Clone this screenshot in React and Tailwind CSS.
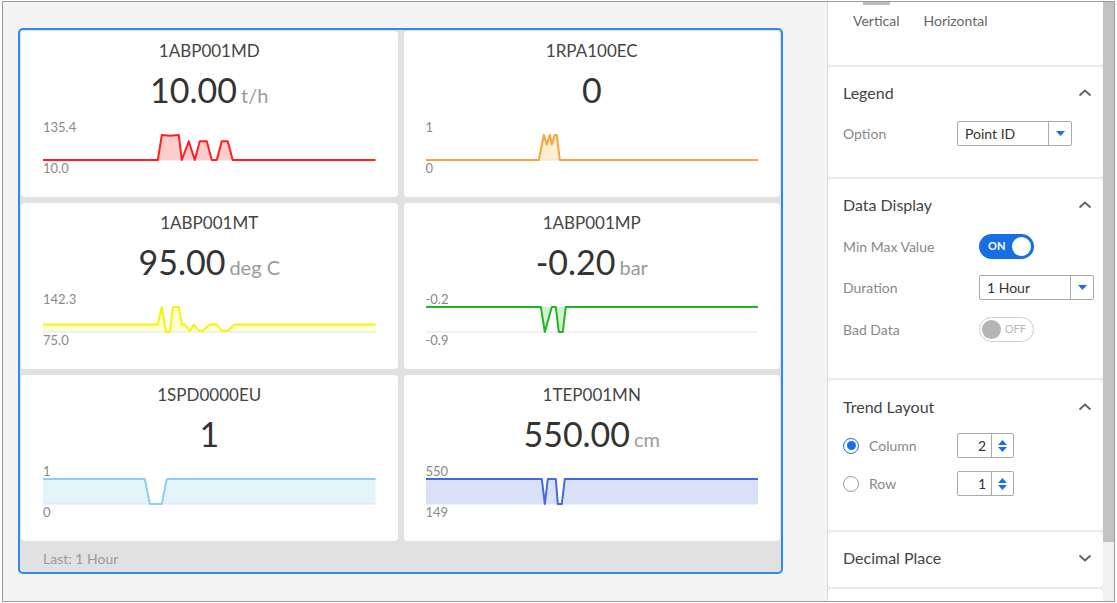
import React from "react";

// trend cards: x offsets in px along the chart, f = 0 (min) .. 1 (max)
const trends = [
  {
    id: "1ABP001MD", value: "10.00", unit: "t/h", max: "135.4", min: "10.0",
    color: "#ff1f1f", fill: "rgba(255,0,0,0.2)", origin: "bottom",
    pts: [[0, 0], [115, 0], [119, 1], [127, 0.97], [136, 1], [139, 0], [146, 0.75], [152, 0], [157, 0.75], [164, 0.75], [169, 0], [174, 0], [179, 0.75], [185, 0.75], [190, 0], [333, 0]],
  },
  {
    id: "1RPA100EC", value: "0", unit: "", max: "1", min: "0",
    color: "#f7a53c", fill: "rgba(255,165,0,0.18)", origin: "bottom",
    pts: [[0, 0], [113, 0], [118, 1], [121, 0.62], [124, 1], [126, 0.62], [129, 1], [131, 1], [134, 0], [333, 0]],
  },
  {
    id: "1ABP001MT", value: "95.00", unit: "deg C", max: "142.3", min: "75.0",
    color: "#f5f500", fill: "rgba(255,255,0,0.18)", origin: "bottom",
    pts: [[0, 0.3], [115, 0.3], [119, 1], [123, 0], [127, 0], [130, 1], [136, 1], [139, 0.3], [142, 0.3], [147, 0.05], [151, 0.3], [156, 0.05], [160, 0.05], [167, 0.3], [174, 0.3], [179, 0.05], [185, 0.05], [192, 0.3], [333, 0.3]],
  },
  {
    id: "1ABP001MP", value: "-0.20", unit: "bar", max: "-0.2", min: "-0.9",
    color: "#22b522", fill: "rgba(0,180,0,0.18)", origin: "top",
    pts: [[0, 1], [115, 1], [119, 0], [126, 1], [130, 1], [133, 0], [137, 0], [140, 1], [333, 1]],
  },
  {
    id: "1SPD0000EU", value: "1", unit: "", max: "1", min: "0",
    color: "#8ccfee", fill: "rgba(135,206,235,0.22)", origin: "bottom",
    pts: [[0, 1], [102, 1], [107, 0], [119, 0], [124, 1], [333, 1]],
  },
  {
    id: "1TEP001MN", value: "550.00", unit: "cm", max: "550", min: "149",
    color: "#4468de", fill: "rgba(65,105,225,0.2)", origin: "bottom",
    pts: [[0, 1], [116, 1], [119, 0], [122, 1], [130, 1], [132, 0], [136, 0], [139, 1], [333, 1]],
  },
];

const toY = (f) => 1 + (1 - f) * 25;

function Sparkline({ t }) {
  const line = t.pts.map(([x, f], i) => `${i ? "L" : "M"}${x} ${toY(f)}`).join(" ");
  const base = t.origin === "top" ? 1 : 26;
  const area = `${line} L333 ${base} L0 ${base} Z`;
  return (
    <svg viewBox="0 0 333 27" preserveAspectRatio="none" className="block w-full h-[27px]">
      <path d={area} fill={t.fill} stroke="none" />
      <line x1="0" y1="26" x2="333" y2="26" stroke="#dbe3f3" strokeWidth="1" />
      <path d={line} fill="none" stroke={t.color} strokeWidth="2" strokeLinejoin="round" />
    </svg>
  );
}

function TrendCard({ t }) {
  return (
    <div className="bg-white rounded-[4px] h-[166px] flex flex-col pt-[8px] px-[22px]">
      <div className="text-center text-[17px] leading-[24px] text-[#454545]">{t.id}</div>
      <div className="mt-[7px] h-[40px] flex items-baseline justify-center">
        <span className="text-[34px] leading-[40px] text-[#333]">{t.value}</span>
        {t.unit && <span className="ml-[4px] text-[20px] text-[#9a9a9a]">{t.unit}</span>}
      </div>
      <div className="mt-[10px] text-[13px] leading-[14px] text-[#8a8a8a]">{t.max}</div>
      <Sparkline t={t} />
      <div className="text-[13px] leading-[14px] text-[#8a8a8a]">{t.min}</div>
    </div>
  );
}

function Chevron({ down }) {
  return (
    <svg width="14" height="8" viewBox="0 0 14 8" className="mr-[11px]">
      <polyline points={down ? "1.5,1.5 7,6.5 12.5,1.5" : "1.5,6.5 7,1.5 12.5,6.5"} fill="none" stroke="#606060" strokeWidth="1.8" />
    </svg>
  );
}

function SectionHead({ title, down }) {
  return (
    <div className="h-[24px] flex items-center justify-between">
      <span className="text-[16px] text-[#444]">{title}</span>
      <Chevron down={down} />
    </div>
  );
}

function Select({ value, width }) {
  return (
    <div className={`h-[25px] ${width} flex border border-[#aaa] rounded-[2px] bg-white`}>
      <span className="flex-1 pl-[7px] text-[14px] leading-[23px] text-[#333]">{value}</span>
      <span className="w-[23px] border-l border-[#aaa] flex items-center justify-center">
        <svg width="9" height="5" viewBox="0 0 9 5"><polygon points="0,0 9,0 4.5,5" fill="#1d6fe6" /></svg>
      </span>
    </div>
  );
}

function Spinner({ value }) {
  return (
    <div className="h-[25px] w-[57px] flex border border-[#aaa] rounded-[2px] bg-white">
      <span className="w-[33px] pr-[5px] text-right text-[14px] leading-[23px] text-[#333]">{value}</span>
      <span className="flex-1 border-l border-[#aaa] flex flex-col items-center justify-center gap-[2px]">
        <svg width="9" height="5" viewBox="0 0 9 5"><polygon points="0,5 9,5 4.5,0" fill="#1d6fe6" /></svg>
        <svg width="9" height="5" viewBox="0 0 9 5"><polygon points="0,0 9,0 4.5,5" fill="#1d6fe6" /></svg>
      </span>
    </div>
  );
}

function Radio({ checked, label }) {
  return (
    <div className="w-[114px] flex items-center">
      <span className={`w-[16px] h-[16px] rounded-full border flex items-center justify-center ${checked ? "border-[#1d6fe6]" : "border-[#9a9a9a]"}`}>
        {checked && <span className="w-[9px] h-[9px] rounded-full bg-[#1d6fe6]" />}
      </span>
      <span className="ml-[10px] text-[14px] text-[#888]">{label}</span>
    </div>
  );
}

function Row({ label, labelW, children, className }) {
  return (
    <div className={`h-[25px] flex items-center ${className}`}>
      <span className={`${labelW} text-[14px] text-[#888]`}>{label}</span>
      {children}
    </div>
  );
}

export default function App() {
  return (
    <div className="w-[1117px] h-[603px] bg-white pt-[1px] pl-[2px] font-['Lato','Liberation_Sans',sans-serif]">
      <div className="w-[1113px] h-[601px] border border-[#9c9c9c] flex overflow-hidden">
        {/* trend area */}
        <div className="w-[824px] bg-[#f4f4f4] pl-[15px] pt-[26px]">
          <div className="w-[765px] h-[546px] border-2 border-[#2f8bf0] rounded-[5px] bg-[#e1e1e1] flex flex-col">
            <div className="grid grid-cols-2 gap-[6px] p-[1px]">
              {trends.map((t) => (
                <TrendCard key={t.id} t={t} />
              ))}
            </div>
            <div className="flex-1 flex items-center pl-[23px] pt-[3px] text-[14px] text-[#9a9a9a]">Last: 1 Hour</div>
          </div>
        </div>

        {/* settings panel */}
        <div className="w-[276px] bg-[#ececec] border-l border-[#dcdcdc] flex flex-col gap-[2px]">
          <div className="h-[63px] bg-white rounded-b-[4px]">
            <div className="ml-[35px] w-[27px] h-[3px] bg-[#bdbdbd]" />
            <div className="mt-[6px] pl-[25px] flex gap-[24px] text-[14px] leading-[20px] text-[#666]">
              <span>Vertical</span>
              <span>Horizontal</span>
            </div>
          </div>

          <div className="h-[110px] bg-white rounded-[4px] pt-[14px] pl-[15px]">
            <SectionHead title="Legend" />
            <Row label="Option" labelW="w-[114px]" className="mt-[16px]">
              <Select value="Point ID" width="w-[115px]" />
            </Row>
          </div>

          <div className="h-[199px] bg-white rounded-[4px] pt-[14px] pl-[15px]">
            <SectionHead title="Data Display" />
            <Row label="Min Max Value" labelW="w-[136px]" className="mt-[17px]">
              <div className="w-[55px] h-[25px] rounded-full bg-[#1a6ee3] flex items-center pl-[9px] pr-[3px]">
                <span className="flex-1 text-[11px] font-bold text-white">ON</span>
                <span className="w-[19px] h-[19px] rounded-full bg-white" />
              </div>
            </Row>
            <Row label="Duration" labelW="w-[136px]" className="mt-[16px]">
              <Select value="1 Hour" width="w-[115px]" />
            </Row>
            <Row label="Bad Data" labelW="w-[136px]" className="mt-[17px]">
              <div className="w-[55px] h-[25px] rounded-full border border-[#cfcfcf] bg-white flex items-center pl-[2px] pr-[7px]">
                <span className="w-[19px] h-[19px] rounded-full bg-[#b5b5b5]" />
                <span className="flex-1 text-right text-[11px] text-[#b8b8b8]">OFF</span>
              </div>
            </Row>
          </div>

          <div className="h-[150px] bg-white rounded-[4px] pt-[15px] pl-[15px]">
            <SectionHead title="Trend Layout" />
            <div className="mt-[14px] h-[25px] flex items-center">
              <Radio checked label="Column" />
              <Spinner value="2" />
            </div>
            <div className="mt-[13px] h-[25px] flex items-center">
              <Radio label="Row" />
              <Spinner value="1" />
            </div>
          </div>

          <div className="h-[55px] bg-white rounded-[4px] pt-[14px] pl-[15px]">
            <SectionHead title="Decimal Place" down />
          </div>

          <div className="flex-1 bg-white rounded-t-[4px]" />
        </div>

        {/* scrollbar */}
        <div className="flex-1 flex flex-col bg-[#f1f1f1]">
          <div className="h-[540px] bg-[#c2c2c2]" />
        </div>
      </div>
    </div>
  );
}
